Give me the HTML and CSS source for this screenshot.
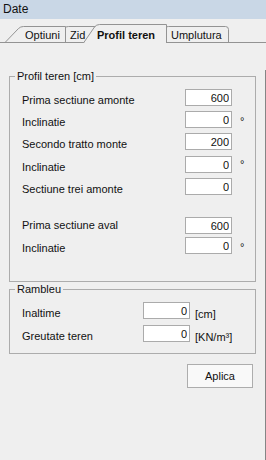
FILE: index.html
```html
<!DOCTYPE html>
<html lang="ro">
<head>
    <meta charset="UTF-8">
    <meta name="viewport" content="width=device-width, initial-scale=1.0">
    <title>Date</title>
    <link rel="stylesheet" href="styles.css">
</head>
<body>
    <div class="window">
        <!-- Bara de titlu -->
        <div class="titlebar">Date</div>

        <!-- Taburi -->
        <div class="tabstrip">
            <div class="tab tab-optiuni">
                <svg class="tab-shape" width="61" height="16"><path d="M0.5,16 L13.5,2.5 Q15.5,0.5 18.5,0.5 H60.5 V16"/></svg>
                <span class="tab-label">Optiuni</span>
            </div>
            <div class="tab tab-zid">
                <svg class="tab-shape" width="50" height="16"><path d="M0.5,16 L13.5,2.5 Q15.5,0.5 18.5,0.5 H49.5 V16"/></svg>
                <span class="tab-label">Zid</span>
            </div>
            <div class="tab tab-profil active">
                <svg class="tab-shape" width="84" height="19"><path d="M0.5,19 L11.5,3 Q13.5,0.5 16.5,0.5 H83.5 V19"/></svg>
                <span class="tab-label">Profil teren</span>
            </div>
            <div class="tab tab-umplutura">
                <svg class="tab-shape" width="79" height="16"><path d="M0.5,16 L13.5,2.5 Q15.5,0.5 18.5,0.5 H75.5 Q78.5,0.5 78.5,3.5 V16"/></svg>
                <span class="tab-label">Umplutura</span>
            </div>
        </div>

        <div class="tabpage">
            <fieldset class="group group-profil">
                <legend>Profil teren [cm]</legend>
                <div class="row">
                    <label>Prima sectiune amonte</label>
                    <input class="num" type="text" value="600">
                </div>
                <div class="row">
                    <label>Inclinatie</label>
                    <input class="num" type="text" value="0">
                    <span class="unit deg">°</span>
                </div>
                <div class="row">
                    <label>Secondo tratto monte</label>
                    <input class="num" type="text" value="200">
                </div>
                <div class="row wide">
                    <label>Inclinatie</label>
                    <input class="num" type="text" value="0">
                    <span class="unit deg up">°</span>
                </div>
                <div class="row">
                    <label>Sectiune trei amonte</label>
                    <input class="num" type="text" value="0">
                </div>
                <div class="row section">
                    <label class="centered">Prima sectiune aval</label>
                    <input class="num" type="text" value="600">
                </div>
                <div class="row close">
                    <label>Inclinatie</label>
                    <input class="num" type="text" value="0">
                    <span class="unit deg">°</span>
                </div>
            </fieldset>

            <fieldset class="group group-rambleu">
                <legend>Rambleu</legend>
                <div class="row">
                    <label>Inaltime</label>
                    <input class="num" type="text" value="0">
                    <span class="unit">[cm]</span>
                </div>
                <div class="row">
                    <label>Greutate teren</label>
                    <input class="num" type="text" value="0">
                    <span class="unit">[KN/m³]</span>
                </div>
            </fieldset>

            <div class="actions">
                <button class="btn" type="button">Aplica</button>
            </div>
        </div>
    </div>
</body>
</html>
```

FILE: styles.css
```css
/* Culori in stil Windows */
:root {
    --win-bg: #efefef;
    --win-title: #c9d7e6;
    --win-text: #111;
    --tab-border: #939393;
    --group-border: #acacac;
    --input-border: #ababab;
    --page-border: #858585;
}

* {
    box-sizing: border-box;
}

body {
    margin: 0;
    background: var(--win-bg);
    color: var(--win-text);
    font-family: "Liberation Sans", Arial, sans-serif;
    font-size: 11px;
}

.window {
    width: 266px;
    height: 460px;
    overflow: hidden;
}

.titlebar {
    height: 19px;
    padding-left: 3px;
    line-height: 19px;
    font-size: 12px;
    background: var(--win-title);
}

/* Taburi */
.tabstrip {
    display: flex;
    align-items: flex-end;
    height: 24px;
    padding-left: 5px;
    border-bottom: 1px solid var(--tab-border);
}

.tab {
    position: relative;
    height: 16px;
    line-height: 16px;
    white-space: nowrap;
}

.tab-shape {
    position: absolute;
    top: 0;
    left: 0;
    display: block;
}

.tab-shape path {
    fill: var(--win-bg);
    stroke: var(--tab-border);
    stroke-width: 1;
}

.tab-label {
    position: relative;
    display: block;
    padding-top: 1px;
}

.tab-optiuni {
    width: 61px;
    padding-left: 20px;
    z-index: 3;
}

.tab-zid {
    width: 50px;
    margin-left: -16px;
    padding-left: 20px;
    z-index: 2;
}

.tab-profil {
    width: 84px;
    height: 19px;
    margin-left: -17px;
    margin-bottom: -1px;
    padding-left: 14px;
    z-index: 5;
}

.tab-profil .tab-label {
    padding-top: 3px;
    font-weight: bold;
}

.tab-umplutura {
    width: 79px;
    margin-left: -17px;
    padding-left: 21px;
    z-index: 1;
}

/* Pagina tabului */
.tabpage {
    width: 266px;
    height: 417px;
    border-right: 1px solid var(--page-border);
}

.group {
    width: 247px;
    margin: 0 0 0 9px;
    padding: 6px 0 0 0;
    border: 1px solid var(--group-border);
    min-width: 0;
}

.group legend {
    margin-left: 5px;
    padding: 0 2px;
    line-height: 13px;
}

.group-profil {
    margin-top: 27px;
    padding-bottom: 27px;
}

.group-rambleu {
    margin-top: 1px;
    padding-bottom: 11px;
}

.row {
    display: grid;
    align-items: start;
    height: 17px;
    margin-top: 5px;
    padding-left: 12px;
}

.row:first-of-type {
    margin-top: 0;
}

.group-profil .row {
    grid-template-columns: 163px 47px auto;
}

.group-rambleu .row {
    grid-template-columns: 121px 47px auto;
    margin-top: 6px;
}

.group-rambleu .row:first-of-type {
    margin-top: 0;
}

.row.wide {
    margin-top: 6px;
}

.row.section {
    margin-top: 22px;
}

.row.close {
    margin-top: 3px;
}

.row label {
    line-height: 17px;
    padding-top: 3px;
    white-space: nowrap;
}

.row label.centered {
    padding-top: 0;
}

.num {
    width: 47px;
    height: 17px;
    padding: 0 2px 0 0;
    border: 1px solid var(--input-border);
    background: #fff;
    color: var(--win-text);
    font-family: inherit;
    font-size: 11px;
    text-align: right;
    outline: none;
}

.unit {
    line-height: 17px;
    padding-top: 4px;
    margin-left: 5px;
    white-space: nowrap;
}

.unit.deg {
    margin-left: 8px;
    padding-top: 2px;
}

.unit.deg.up {
    padding-top: 0;
}

.actions {
    display: flex;
    justify-content: flex-end;
    padding-right: 12px;
    margin-top: 10px;
}

.btn {
    width: 66px;
    height: 24px;
    border: 1px solid #adadad;
    background: #f9f9f9;
    color: var(--win-text);
    font-family: inherit;
    font-size: 11px;
    padding: 0;
}
```
